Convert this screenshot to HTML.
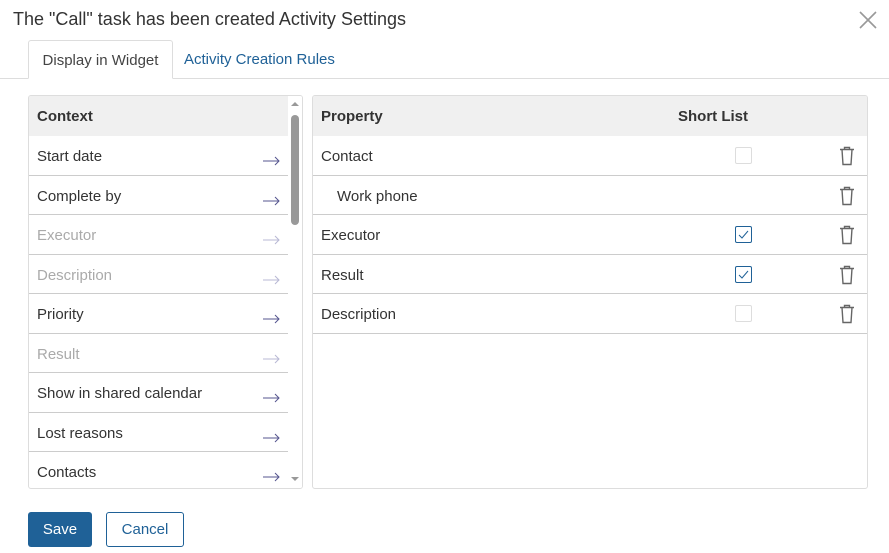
<!DOCTYPE html>
<html><head><style>
*{box-sizing:border-box;margin:0;padding:0}
body{width:889px;height:553px;background:#fff;font-family:"Liberation Sans",sans-serif;color:#333;position:relative;overflow:hidden}
.a{position:absolute}
.title{left:13px;top:9px;font-size:18px;color:#333}
.close{left:858px;top:10px;width:20px;height:20px}
.tabline{left:0;top:78px;width:889px;height:1px;background:#ddd}
.tab1{left:28px;top:40px;width:145px;height:39px;border:1px solid #ddd;border-bottom:1px solid #fff;border-radius:3px 3px 0 0;background:#fff;font-size:15px;padding-top:11px;text-align:center;color:#444}
.tab2{left:184px;top:51px;font-size:15px;color:#1f6197}
.panel{border:1px solid #ddd;border-radius:3px;background:#fff;overflow:hidden}
.hdr{height:40px;background:#f0f0f0;font-weight:bold;font-size:15px;line-height:42px;padding-left:8px;color:#333}
.row{height:39.5px;border-bottom:1px solid #ccc;font-size:15px;line-height:41px;padding-left:8px;position:relative}
.dim{color:#aaa}
.arr{position:absolute;right:8px;top:6px;width:17px;height:10px}
.tr{position:absolute;left:525px;top:10px}
.cb{position:absolute;left:422px;top:11px;width:17px;height:17px;border:1px solid #ddd;border-radius:2px}
.cb.on{border-color:#1f6197}
.btn{top:512px;height:35px;border-radius:3px;font-size:15px;line-height:35px;text-align:center}
</style></head><body>
<div class="a title">The "Call" task has been created Activity Settings</div>
<svg class="a close" viewBox="0 0 20 20"><path d="M2 2L18 18M18 2L2 18" stroke="#999" stroke-width="1.6"/></svg>
<div class="a tabline"></div>
<div class="a tab1">Display in Widget</div>
<div class="a tab2">Activity Creation Rules</div>

<div class="a panel" style="left:28px;top:95px;width:275px;height:394px">
 <div style="width:259px">
 <div class="hdr">Context</div>
 <div class="row">Start date<svg class="arr" style="top:20px" viewBox="0 0 17 10"><path d="M0 5H16M12 1L16 5L12 9" fill="none" stroke="#55558f" stroke-width="1"/></svg></div>
 <div class="row">Complete by<svg class="arr" style="top:20px" viewBox="0 0 17 10"><path d="M0 5H16M12 1L16 5L12 9" fill="none" stroke="#55558f" stroke-width="1"/></svg></div>
 <div class="row dim">Executor<svg class="arr" style="top:20px" viewBox="0 0 17 10"><path d="M0 5H16M12 1L16 5L12 9" fill="none" stroke="#b8b8d4" stroke-width="1"/></svg></div>
 <div class="row dim">Description<svg class="arr" style="top:20px" viewBox="0 0 17 10"><path d="M0 5H16M12 1L16 5L12 9" fill="none" stroke="#b8b8d4" stroke-width="1"/></svg></div>
 <div class="row">Priority<svg class="arr" style="top:20px" viewBox="0 0 17 10"><path d="M0 5H16M12 1L16 5L12 9" fill="none" stroke="#55558f" stroke-width="1"/></svg></div>
 <div class="row dim">Result<svg class="arr" style="top:20px" viewBox="0 0 17 10"><path d="M0 5H16M12 1L16 5L12 9" fill="none" stroke="#b8b8d4" stroke-width="1"/></svg></div>
 <div class="row">Show in shared calendar<svg class="arr" style="top:20px" viewBox="0 0 17 10"><path d="M0 5H16M12 1L16 5L12 9" fill="none" stroke="#55558f" stroke-width="1"/></svg></div>
 <div class="row">Lost reasons<svg class="arr" style="top:20px" viewBox="0 0 17 10"><path d="M0 5H16M12 1L16 5L12 9" fill="none" stroke="#55558f" stroke-width="1"/></svg></div>
 <div class="row">Contacts<svg class="arr" style="top:20px" viewBox="0 0 17 10"><path d="M0 5H16M12 1L16 5L12 9" fill="none" stroke="#55558f" stroke-width="1"/></svg></div>
 </div>
 <div class="a" style="left:259px;top:0;width:15px;height:394px;background:#fff"></div>
 <svg class="a" style="left:261px;top:4px" width="10" height="8"><path d="M1 6L5 2L9 6Z" fill="#999"/></svg>
 <div class="a" style="left:262px;top:19px;width:8px;height:110px;background:#999;border-radius:4px"></div>
 <svg class="a" style="left:261px;top:379px" width="10" height="8"><path d="M1 2L5 6L9 2Z" fill="#999"/></svg>
</div>

<div class="a panel" style="left:312px;top:95px;width:556px;height:394px">
 <div class="hdr">Property<span class="a" style="left:365px;top:0">Short List</span></div>
 <div class="row">Contact<span class="cb"></span><svg class="tr" width="18" height="20" viewBox="0 0 18 20"><path d="M2 3.5H16M6.5 3.5V1.5H11.5V3.5M4 3.5L5 18.5H13L14 3.5" fill="none" stroke="#666" stroke-width="1.4"/></svg></div>
 <div class="row" style="padding-left:24px">Work phone<svg class="tr" width="18" height="20" viewBox="0 0 18 20"><path d="M2 3.5H16M6.5 3.5V1.5H11.5V3.5M4 3.5L5 18.5H13L14 3.5" fill="none" stroke="#666" stroke-width="1.4"/></svg></div>
 <div class="row">Executor<span class="cb on"><svg width="15" height="15" style="position:absolute;left:0;top:0"><path d="M3 8L6 11L12 4" fill="none" stroke="#1f6197" stroke-width="1"/></svg></span><svg class="tr" width="18" height="20" viewBox="0 0 18 20"><path d="M2 3.5H16M6.5 3.5V1.5H11.5V3.5M4 3.5L5 18.5H13L14 3.5" fill="none" stroke="#666" stroke-width="1.4"/></svg></div>
 <div class="row">Result<span class="cb on"><svg width="15" height="15" style="position:absolute;left:0;top:0"><path d="M3 8L6 11L12 4" fill="none" stroke="#1f6197" stroke-width="1"/></svg></span><svg class="tr" width="18" height="20" viewBox="0 0 18 20"><path d="M2 3.5H16M6.5 3.5V1.5H11.5V3.5M4 3.5L5 18.5H13L14 3.5" fill="none" stroke="#666" stroke-width="1.4"/></svg></div>
 <div class="row">Description<span class="cb"></span><svg class="tr" width="18" height="20" viewBox="0 0 18 20"><path d="M2 3.5H16M6.5 3.5V1.5H11.5V3.5M4 3.5L5 18.5H13L14 3.5" fill="none" stroke="#666" stroke-width="1.4"/></svg></div>
</div>

<div class="a btn" style="left:28px;width:64px;background:#1f6197;color:#fff">Save</div>
<div class="a btn" style="left:106px;width:78px;border:1px solid #1f6197;color:#1f6197;line-height:33px">Cancel</div>
</body></html>
